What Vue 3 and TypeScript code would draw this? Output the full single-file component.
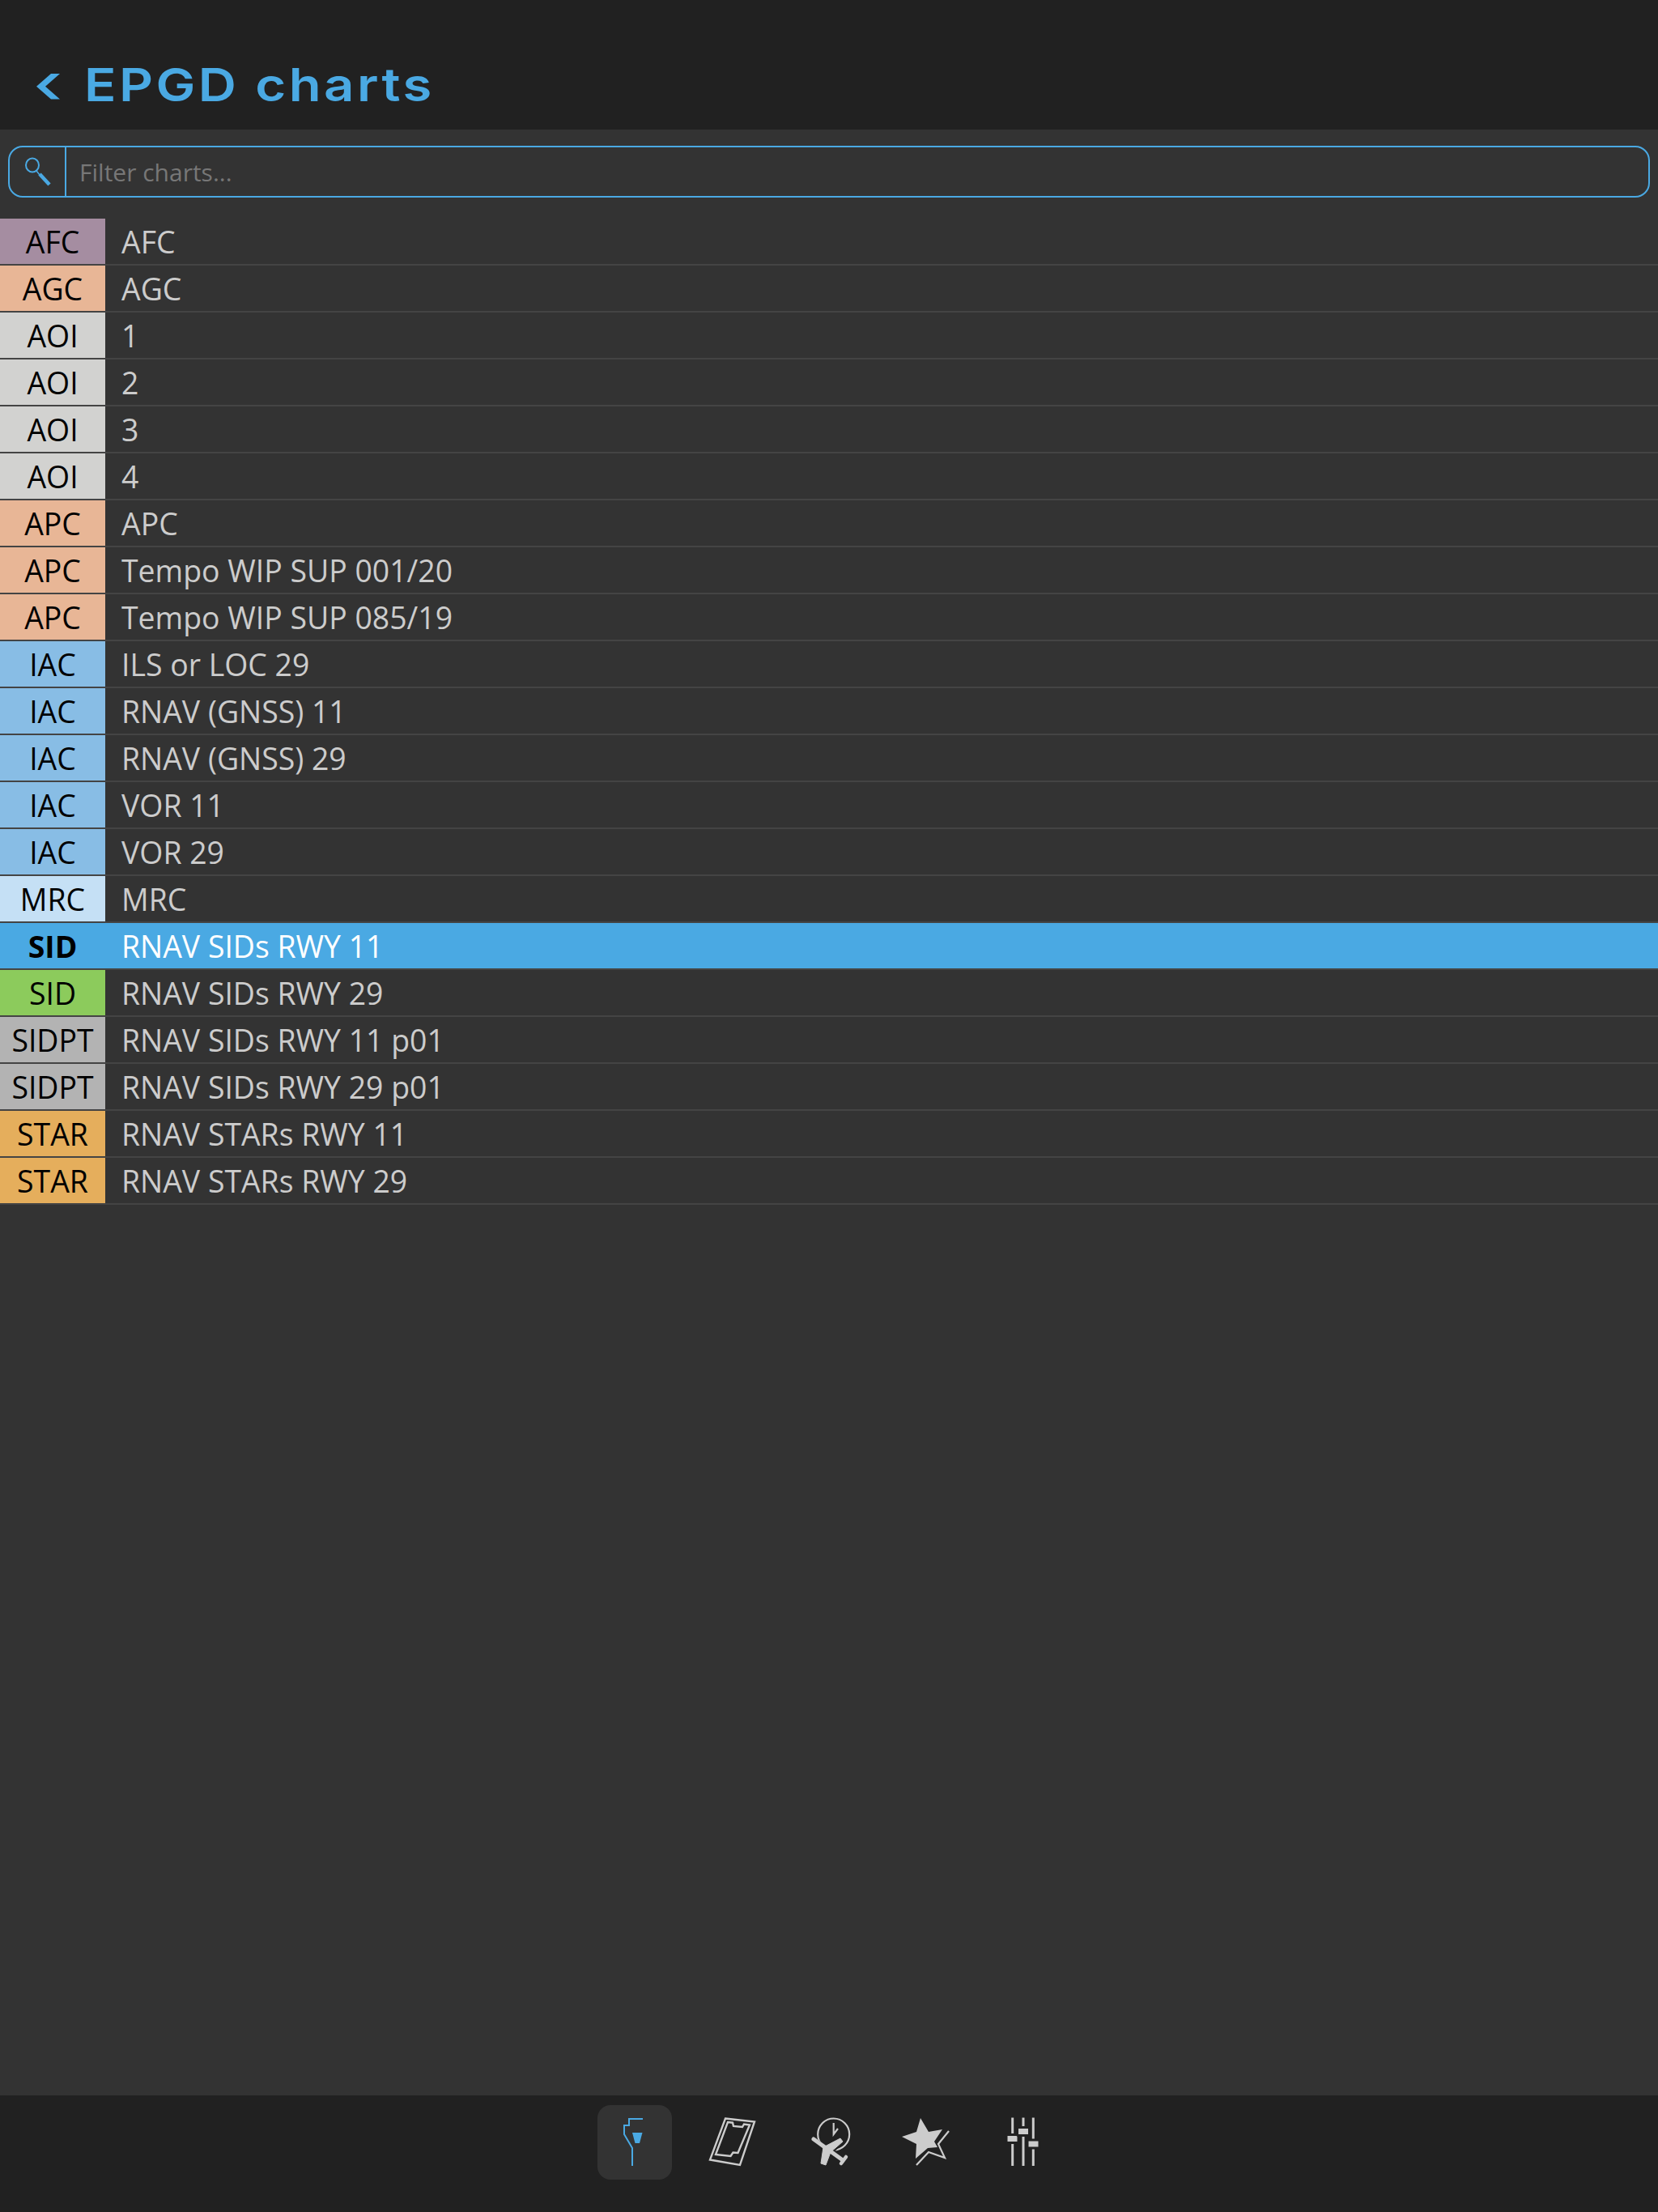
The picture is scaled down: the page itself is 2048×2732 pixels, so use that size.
<script setup lang="ts">
interface Chart { tag: string; cls: string; name: string; selected?: boolean }
const charts: Chart[] = [
  { tag: 'AFC', cls: 'afc', name: 'AFC' },
  { tag: 'AGC', cls: 'agc', name: 'AGC' },
  { tag: 'AOI', cls: 'aoi', name: '1' },
  { tag: 'AOI', cls: 'aoi', name: '2' },
  { tag: 'AOI', cls: 'aoi', name: '3' },
  { tag: 'AOI', cls: 'aoi', name: '4' },
  { tag: 'APC', cls: 'agc', name: 'APC' },
  { tag: 'APC', cls: 'agc', name: 'Tempo WIP SUP 001/20' },
  { tag: 'APC', cls: 'agc', name: 'Tempo WIP SUP 085/19' },
  { tag: 'IAC', cls: 'iac', name: 'ILS or LOC 29' },
  { tag: 'IAC', cls: 'iac', name: 'RNAV (GNSS) 11' },
  { tag: 'IAC', cls: 'iac', name: 'RNAV (GNSS) 29' },
  { tag: 'IAC', cls: 'iac', name: 'VOR 11' },
  { tag: 'IAC', cls: 'iac', name: 'VOR 29' },
  { tag: 'MRC', cls: 'mrc', name: 'MRC' },
  { tag: 'SID', cls: 'sel', name: 'RNAV SIDs RWY 11', selected: true },
  { tag: 'SID', cls: 'sid', name: 'RNAV SIDs RWY 29' },
  { tag: 'SIDPT', cls: 'sidpt', name: 'RNAV SIDs RWY 11 p01' },
  { tag: 'SIDPT', cls: 'sidpt', name: 'RNAV SIDs RWY 29 p01' },
  { tag: 'STAR', cls: 'star', name: 'RNAV STARs RWY 11' },
  { tag: 'STAR', cls: 'star', name: 'RNAV STARs RWY 29' },
]
</script>

<template>
  <div class="page">
    <header class="header">
      <svg class="back" viewBox="0 0 40 44" width="40" height="44" aria-hidden="true">
        <polygon points="34,7 23,7 5,22.7 23,38.5 34,38.5 16,22.7" fill="#4aa9e3" />
      </svg>
      <h1 class="title">EPGD charts</h1>
    </header>

    <div class="filter">
      <div class="filter-icon">
        <svg viewBox="0 0 68 60" width="68" height="60" aria-hidden="true">
          <ellipse cx="28" cy="22" rx="8" ry="8.5" fill="none" stroke="#4aa9e3" stroke-width="2" />
          <line x1="33" y1="29" x2="37" y2="34" stroke="#4aa9e3" stroke-width="1.6" />
          <line x1="37" y1="33" x2="49" y2="46" stroke="#4aa9e3" stroke-width="4.5" />
        </svg>
      </div>
      <input class="filter-input" type="text" placeholder="Filter charts..." />
    </div>

    <main class="list">
      <div v-for="(c, i) in charts" :key="i" class="row" :class="{ selected: c.selected }">
        <div class="tag" :class="c.cls">{{ c.tag }}</div>
        <div class="name">{{ c.name }}</div>
      </div>
    </main>

    <footer class="tabbar">
      <div class="tab active">
        <svg viewBox="0 0 80 80" width="80" height="80" aria-hidden="true">
          <polyline points="50,11 33,11 33,19 27,19 27,30 37,47 37,69" fill="none" stroke="#4aa9e3" stroke-width="2" />
          <polygon points="37,28 49.5,28 46,41 40.5,41" fill="#4aa9e3" />
        </svg>
      </div>
      <div class="tab">
        <svg viewBox="0 0 80 80" width="80" height="80" aria-hidden="true">
          <polygon points="32,10.5 68,14.5 50,68 13,61.5" fill="none" stroke="#cccccc" stroke-width="2.4" />
          <polygon points="35,15 41,15.7 42,20 53,21 55,17.5 62,18.5 47.5,53 41.5,52.5 38.5,57 20,55" fill="none" stroke="#cccccc" stroke-width="2.4" />
        </svg>
      </div>
      <div class="tab">
        <svg viewBox="0 0 80 80" width="80" height="80" aria-hidden="true">
          <circle cx="45.7" cy="30" r="19.5" fill="none" stroke="#cccccc" stroke-width="2.2" />
          <polyline points="45.7,16 45.7,30 51,23" fill="none" stroke="#cccccc" stroke-width="2.2" />
          <g fill="#212121" stroke="#212121" stroke-width="5">
            <polygon points="54,35 57,39 42,52 36,68 30,66 33,46" />
            <line x1="21" y1="36" x2="57" y2="62" />
            <line x1="61" y1="58" x2="54" y2="67" />
          </g>
          <g fill="#cccccc" stroke="#cccccc">
            <polygon points="54,35 57,39 42,52 36,68 30,66 33,46" stroke-width="1" stroke-linejoin="round" />
            <line x1="21" y1="36" x2="57" y2="62" stroke-width="5" stroke-linecap="round" />
            <line x1="61" y1="58" x2="55" y2="66" stroke-width="4.5" stroke-linecap="round" />
          </g>
        </svg>
      </div>
      <div class="tab">
        <svg viewBox="0 0 80 80" width="80" height="80" aria-hidden="true">
          <polygon points="33,10 43,27 60,24 50,39 54,46 42,47 27,60 28,42 10,33 28,27" fill="#cccccc" />
          <polyline points="68,26 55,42 63,59 43,52 28,68" fill="none" stroke="#cccccc" stroke-width="2.2" />
        </svg>
      </div>
      <div class="tab">
        <svg viewBox="0 0 80 80" width="80" height="80" aria-hidden="true">
          <g stroke="#cccccc" stroke-width="3">
            <line x1="26.7" y1="9.5" x2="26.7" y2="69" />
            <line x1="40" y1="9.5" x2="40" y2="69" />
            <line x1="52.3" y1="9.5" x2="52.3" y2="69" />
          </g>
          <g fill="#cccccc" stroke="#212121" stroke-width="3">
            <rect x="19" y="30.5" width="15" height="10" rx="1.5" />
            <rect x="32.5" y="21.5" width="15" height="10" rx="1.5" />
            <rect x="45" y="37" width="15" height="10" rx="1.5" />
          </g>
        </svg>
      </div>
    </footer>
  </div>
</template>

<style>
html, body { margin: 0; background: #333333; }
</style>

<style scoped>
.page {
  width: 2048px;
  height: 2732px;
  display: flex;
  flex-direction: column;
  background: #333333;
  font-family: "Open Sans", sans-serif;
  overflow: hidden;
}
.header {
  height: 160px;
  box-sizing: border-box;
  background: #212121;
  display: flex;
  align-items: flex-start;
  padding: 84px 0 0 40px;
}
.back { flex: none; margin-right: 24px; }
.title {
  margin: 0;
  font-family: Inter, sans-serif;
  font-size: 57px;
  font-weight: 600;
  line-height: 41px;
  letter-spacing: 3px;
  color: #4aa9e3;
  white-space: nowrap;
  transform: scaleX(1.145);
  transform-origin: left center;
}
.filter {
  height: 64px;
  box-sizing: border-box;
  margin: 20px 10px 26px;
  display: flex;
  border: 2px solid #4aa9e3;
  border-radius: 18px;
  overflow: hidden;
}
.filter-icon {
  width: 68px;
  flex: none;
  border-right: 2px solid #4aa9e3;
}
.filter-icon svg { display: block; }
.filter-input {
  flex: 1;
  min-width: 0;
  border: 0;
  outline: 0;
  padding: 0 0 0 16px;
  background: transparent;
  color: #cccccc;
  font-family: "Open Sans", sans-serif;
  font-size: 30px;
}
.filter-input::placeholder { color: #777777; opacity: 1; }
.list { flex: 1; min-height: 0; }
.row {
  height: 58px;
  box-sizing: border-box;
  display: flex;
  align-items: flex-start;
  border-bottom: 2px solid #444444;
  font-size: 37.4px;
  color: #cccccc;
}
.tag, .name {
  height: 56px;
  line-height: 57px;
  white-space: nowrap;
}
.tag {
  width: 130px;
  flex: none;
  text-align: center;
  color: #000000;
}
.name { padding-left: 20px; }
.afc { background: #a58da1; }
.agc { background: #e8b696; }
.aoi { background: #d2d2d0; }
.iac { background: #88bde5; }
.mrc { background: #c5e0f5; }
.sid { background: #8ccb5c; }
.sidpt { background: #b3b3b3; }
.star { background: #e5ae5c; }
.sel { font-weight: 700; }
.row.selected { background: #4aa9e3; color: #ffffff; }
.tabbar {
  height: 144px;
  box-sizing: border-box;
  flex: none;
  background: #212121;
  padding-top: 12px;
  display: flex;
  justify-content: center;
  align-items: flex-start;
  gap: 28px;
}
.tab {
  width: 92px;
  height: 92px;
  border-radius: 16px;
  display: flex;
  align-items: center;
  justify-content: center;
}
.tab svg { display: block; }
.tab.active { background: #333333; }
</style>
